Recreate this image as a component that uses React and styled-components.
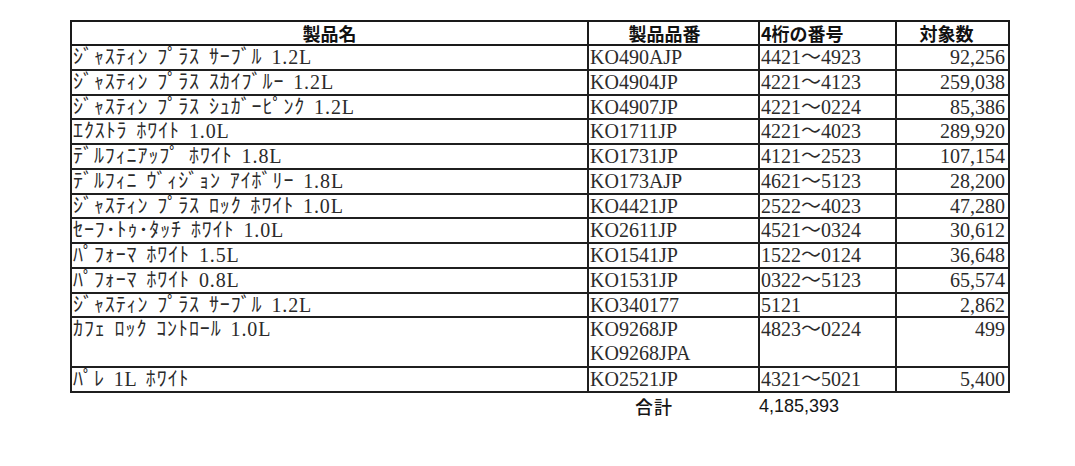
import React from "react";
import styled, { createGlobalStyle } from "styled-components";

const GlobalStyle = createGlobalStyle`
  html, body {
    margin: 0;
    padding: 0;
    background: #ffffff;
  }
`;

const Page = styled.div`
  width: 1075px;
  height: 466px;
  padding: 20px 0 0 70px;
  box-sizing: border-box;
  background: #fff;
`;

const Table = styled.table`
  border-collapse: collapse;
  table-layout: fixed;
  width: 938px;
  font-family: "Liberation Serif", "Noto Sans CJK JP", serif;
  font-size: 20px;
  color: #2b2b2b;
`;

const Head = styled.th`
  height: 22px;
  padding: 0 ${(p) => p.$pr || 0}px 0 ${(p) => p.$pl || 0}px;
  border: 2px solid #1a1a1a;
  font-family: "Noto Sans CJK JP", "Liberation Sans", sans-serif;
  font-size: 18px;
  font-weight: 700;
  line-height: 22px;
  color: #111;
  text-align: ${(p) => p.$align || "center"};
  vertical-align: middle;
`;

const Cell = styled.td`
  height: ${(p) => (p.$double ? 47.5 : 22.75)}px;
  padding: 0 ${(p) => (p.$num ? 3 : 0)}px 0 ${(p) => (p.$num ? 0 : 1)}px;
  border: 2px solid #1f1f1f;
  line-height: 22.75px;
  text-align: ${(p) => (p.$num ? "right" : "left")};
  vertical-align: top;
  white-space: nowrap;
  overflow: hidden;
  letter-spacing: ${(p) => (p.$kana ? 0.9 : 0)}px;
  word-spacing: ${(p) => (p.$kana ? 3 : 0)}px;
`;

const CodeLine = styled.div`
  line-height: ${(p) => (p.$multi ? 23.75 : 22.75)}px;
`;

const TotalCell = styled.td`
  padding: 0 0 0 ${(p) => p.$pl || 0}px;
  border: none;
  height: 26px;
  font-family: "Liberation Sans", "Noto Sans CJK JP", sans-serif;
  font-size: 18px;
  font-weight: 500;
  color: #151515;
  line-height: 26px;
  vertical-align: top;
`;

const TotalLabel = styled.span`
  font-family: "Noto Sans CJK JP", sans-serif;
  font-weight: 500;
  font-size: 18px;
  letter-spacing: 1px;
`;

const rows = [
  ["ｼﾞｬｽﾃｨﾝ ﾌﾟﾗｽ ｻｰﾌﾞﾙ 1.2L", ["KO490AJP"], "4421～4923", "92,256"],
  ["ｼﾞｬｽﾃｨﾝ ﾌﾟﾗｽ ｽｶｲﾌﾞﾙｰ 1.2L", ["KO4904JP"], "4221～4123", "259,038"],
  ["ｼﾞｬｽﾃｨﾝ ﾌﾟﾗｽ ｼｭｶﾞｰﾋﾟﾝｸ 1.2L", ["KO4907JP"], "4221～0224", "85,386"],
  ["ｴｸｽﾄﾗ ﾎﾜｲﾄ 1.0L", ["KO1711JP"], "4221～4023", "289,920"],
  ["ﾃﾞﾙﾌｨﾆｱｯﾌﾟ ﾎﾜｲﾄ 1.8L", ["KO1731JP"], "4121～2523", "107,154"],
  ["ﾃﾞﾙﾌｨﾆ ｳﾞｨｼﾞｮﾝ ｱｲﾎﾞﾘｰ 1.8L", ["KO173AJP"], "4621～5123", "28,200"],
  ["ｼﾞｬｽﾃｨﾝ ﾌﾟﾗｽ ﾛｯｸ ﾎﾜｲﾄ 1.0L", ["KO4421JP"], "2522～4023", "47,280"],
  ["ｾｰﾌ･ﾄｩ･ﾀｯﾁ ﾎﾜｲﾄ 1.0L", ["KO2611JP"], "4521～0324", "30,612"],
  ["ﾊﾟﾌｫｰﾏ ﾎﾜｲﾄ 1.5L", ["KO1541JP"], "1522～0124", "36,648"],
  ["ﾊﾟﾌｫｰﾏ ﾎﾜｲﾄ 0.8L", ["KO1531JP"], "0322～5123", "65,574"],
  ["ｼﾞｬｽﾃｨﾝ ﾌﾟﾗｽ ｻｰﾌﾞﾙ 1.2L", ["KO340177"], "5121", "2,862"],
  ["ｶﾌｪ ﾛｯｸ ｺﾝﾄﾛｰﾙ 1.0L", ["KO9268JP", "KO9268JPA"], "4823～0224", "499"],
  ["ﾊﾟﾚ 1L ﾎﾜｲﾄ", ["KO2521JP"], "4321～5021", "5,400"],
];

export default function App() {
  return (
    <>
      <GlobalStyle />
      <Page>
        <Table>
          <colgroup>
            <col style={{ width: 517 }} />
            <col style={{ width: 171 }} />
            <col style={{ width: 137 }} />
            <col style={{ width: 113 }} />
          </colgroup>
          <thead>
            <tr>
              <Head>製品名</Head>
              <Head $pr={18}>製品品番</Head>
              <Head $align="left" $pl={1}>4桁の番号</Head>
              <Head $pr={12}>対象数</Head>
            </tr>
          </thead>
          <tbody>
            {rows.map(([name, codes, range, count], i) => {
              const double = codes.length > 1;
              return (
                <tr key={i}>
                  <Cell $kana $double={double}>{name}</Cell>
                  <Cell $double={double}>
                    {codes.map((c) => (
                      <CodeLine key={c} $multi={double}>{c}</CodeLine>
                    ))}
                  </Cell>
                  <Cell $double={double}>{range}</Cell>
                  <Cell $num $double={double}>{count}</Cell>
                </tr>
              );
            })}
          </tbody>
          <tfoot>
            <tr>
              <TotalCell />
              <TotalCell $pl={47}>
                <TotalLabel>合計</TotalLabel>
              </TotalCell>
              <TotalCell>4,185,393</TotalCell>
              <TotalCell />
            </tr>
          </tfoot>
        </Table>
      </Page>
    </>
  );
}
